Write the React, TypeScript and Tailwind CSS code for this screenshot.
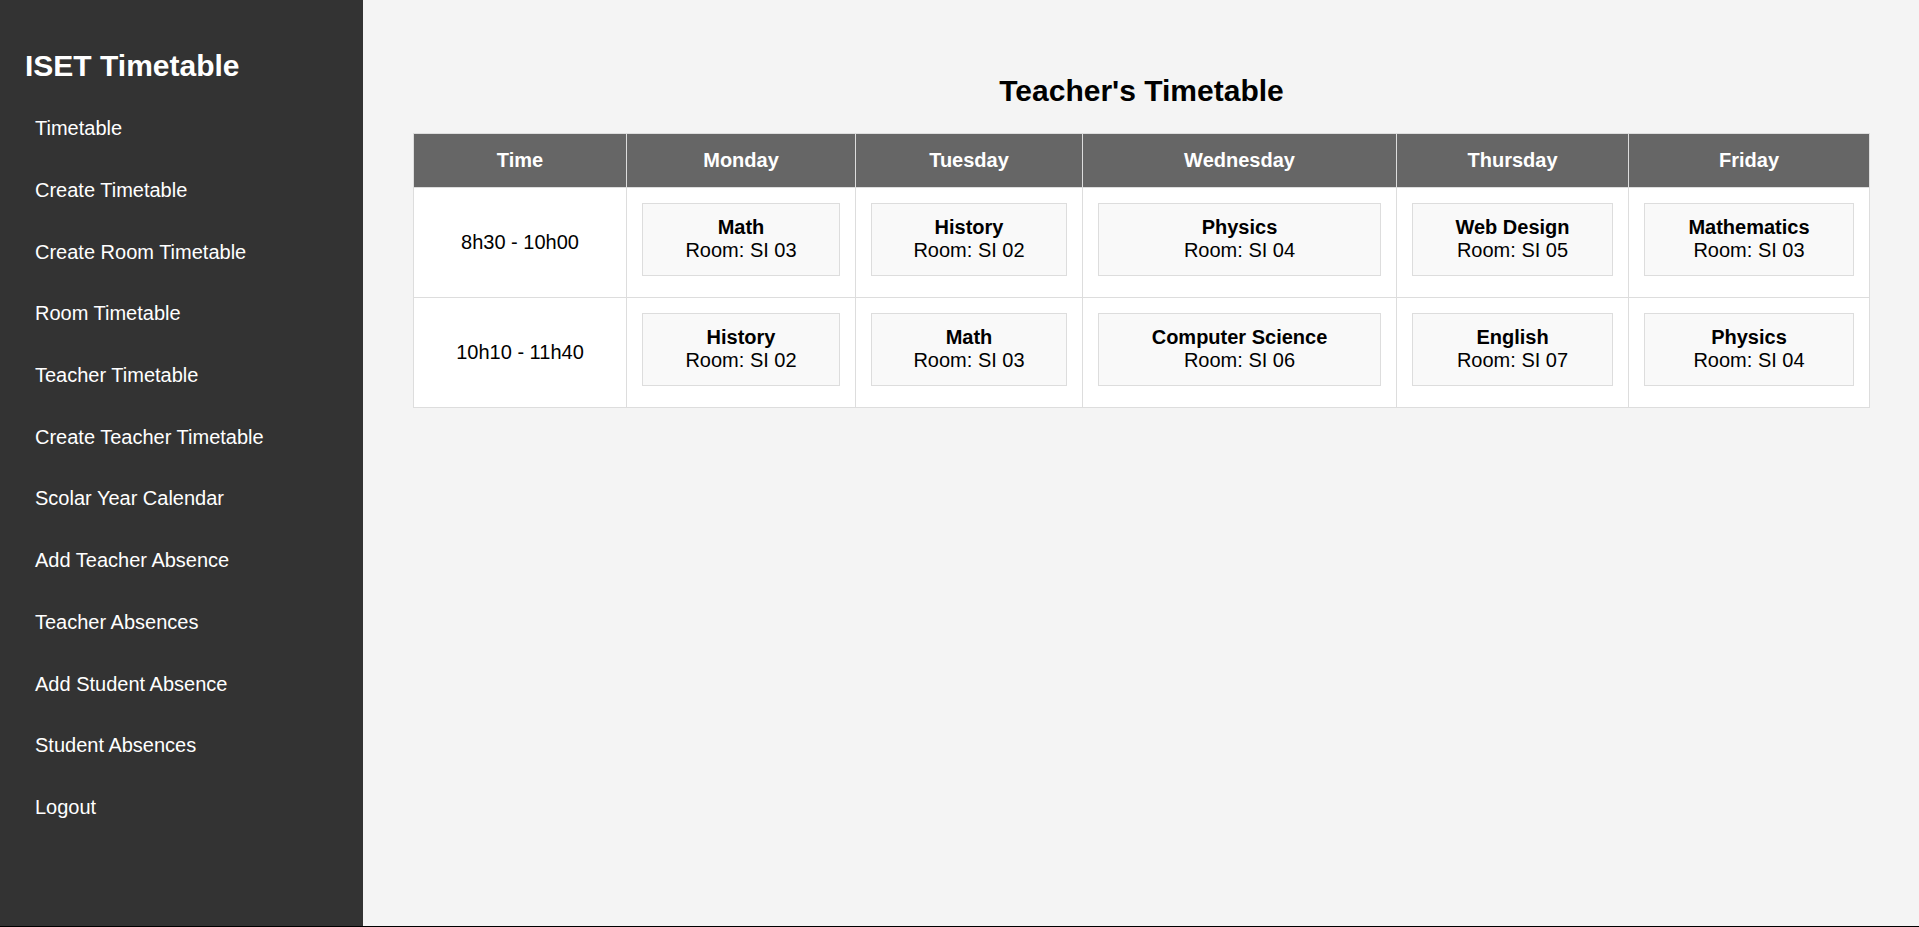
const navLinks = [
  "Timetable",
  "Create Timetable",
  "Create Room Timetable",
  "Room Timetable",
  "Teacher Timetable",
  "Create Teacher Timetable",
  "Scolar Year Calendar",
  "Add Teacher Absence",
  "Teacher Absences",
  "Add Student Absence",
  "Student Absences",
  "Logout",
];

const days = ["Monday", "Tuesday", "Wednesday", "Thursday", "Friday"];

interface Session {
  subject: string;
  room: string;
}

const rows: { time: string; sessions: Session[] }[] = [
  {
    time: "8h30 - 10h00",
    sessions: [
      { subject: "Math", room: "SI 03" },
      { subject: "History", room: "SI 02" },
      { subject: "Physics", room: "SI 04" },
      { subject: "Web Design", room: "SI 05" },
      { subject: "Mathematics", room: "SI 03" },
    ],
  },
  {
    time: "10h10 - 11h40",
    sessions: [
      { subject: "History", room: "SI 02" },
      { subject: "Math", room: "SI 03" },
      { subject: "Computer Science", room: "SI 06" },
      { subject: "English", room: "SI 07" },
      { subject: "Physics", room: "SI 04" },
    ],
  },
];

export default function App() {
  return (
    <div className="h-[927px] bg-black font-['Liberation_Sans',Arial,sans-serif] text-[20px]">
      <div className="flex h-[926px]">
        {/* Sidebar */}
        <aside className="w-[363px] shrink-0 bg-[#333] px-[25px] pt-[25px] text-white">
          <h2 className="mt-[23.5px] text-[30px] font-bold leading-[34px]">ISET Timetable</h2>
          <ul className="mt-[15.5px]">
            {navLinks.map((label) => (
              <li key={label}>
                <a href="#" className="block px-[10px] py-[19.35px] leading-[23px] text-white">
                  {label}
                </a>
              </li>
            ))}
          </ul>
        </aside>

        {/* Main content */}
        <main className="flex-1 bg-[#f4f4f4] px-[50px] pt-[50px]">
          <h2 className="mt-[24px] mb-[25px] text-center text-[30px] font-bold leading-[34px] text-black">
            Teacher's Timetable
          </h2>
          <table className="w-full table-fixed border-collapse bg-white text-black">
            <colgroup>
              <col className="w-[213px]" />
              <col className="w-[229px]" />
              <col className="w-[227px]" />
              <col className="w-[314px]" />
              <col className="w-[232px]" />
              <col className="w-[241px]" />
            </colgroup>
            <thead>
              <tr>
                <th className="border border-[#ddd] bg-[#666] py-[15px] text-center font-bold leading-[23px] text-white">
                  Time
                </th>
                {days.map((d) => (
                  <th
                    key={d}
                    className="border border-[#ddd] bg-[#666] py-[15px] text-center font-bold leading-[23px] text-white"
                  >
                    {d}
                  </th>
                ))}
              </tr>
            </thead>
            <tbody>
              {rows.map((row) => (
                <tr key={row.time}>
                  <td className="border border-[#ddd] py-[15px] text-center align-middle leading-[23px]">
                    {row.time}
                  </td>
                  {row.sessions.map((s, i) => (
                    <td key={i} className="border border-[#ddd] px-[15px] pt-[15px] pb-[21px] align-top">
                      <div className="border border-[#ddd] bg-[#f9f9f9] pt-[11.5px] pb-[13.5px] text-center leading-[23px]">
                        <div className="font-bold">{s.subject}</div>
                        <div>Room: {s.room}</div>
                      </div>
                    </td>
                  ))}
                </tr>
              ))}
            </tbody>
          </table>
        </main>
      </div>
    </div>
  );
}
